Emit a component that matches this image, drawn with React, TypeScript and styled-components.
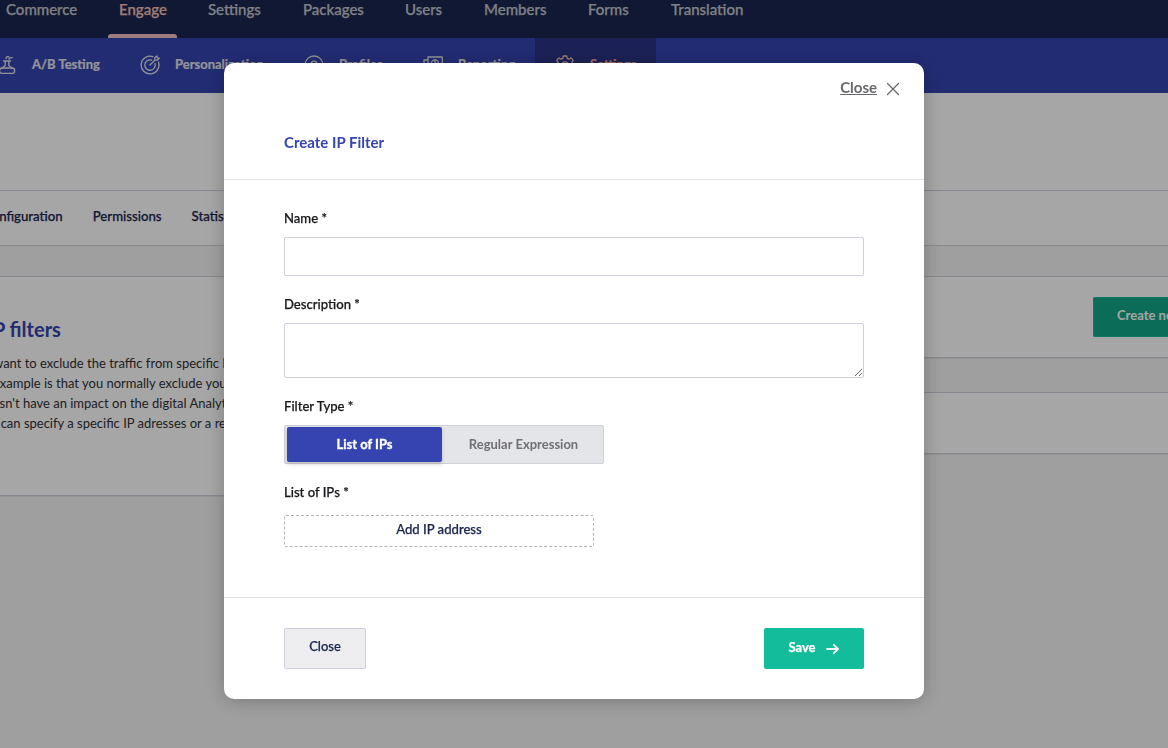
import React from 'react';
import styled, { createGlobalStyle, css } from 'styled-components';

const GlobalStyle = createGlobalStyle`
  *, *::before, *::after { box-sizing: border-box; }
  body { margin: 0; overflow: hidden; font-family: Lato, "Liberation Sans", sans-serif; background: #f5f5f5; }
  button, input, textarea { font-family: inherit; }
`;

const medium = css`
  font-weight: 500;
  -webkit-text-stroke: 0.25px currentColor;
`;

const Screen = styled.div`
  height: 748px;
  overflow: hidden;
  background: #f5f5f5;
`;

const TopNav = styled.nav`
  display: flex;
  height: 38px;
  margin-left: -5px;
  background: #1b264f;
`;

const TopItem = styled.a<{ $active?: boolean; $w: number }>`
  ${medium}
  flex: none;
  width: ${p => p.$w}px;
  height: 38px;
  padding: 0 0 0 11px;
  font-size: 15px;
  line-height: 18px;
  white-space: nowrap;
  color: ${p => (p.$active ? '#f5c1bc' : '#c4c6cd')};
`;

const ActiveMark = styled.span`
  display: block;
  width: 69px;
  height: 4px;
  margin: 16px 0 0 -11px;
  border-radius: 3px 3px 0 0;
  background: #f5c1bc;
`;

const SubNav = styled.nav`
  display: flex;
  height: 55px;
  margin-left: -3px;
  background: #3544b1;
`;

const SubItem = styled.a<{ $w: number; $active?: boolean }>`
  display: flex;
  flex: none;
  align-items: center;
  width: ${p => p.$w}px;
  height: 55px;
  padding: 0 0 3px ${p => (p.$active ? 20 : 0)}px;
  font-size: 13px;
  font-weight: 700;
  -webkit-text-stroke: 0.2px currentColor;
  white-space: nowrap;
  color: ${p => (p.$active ? '#f5a39b' : '#e3e4ea')};
  background: ${p => (p.$active ? '#2a3484' : 'transparent')};
  svg { flex: none; width: 20px; height: 20px; margin: 2px 15px 0 0; color: ${p => (p.$active ? '#f5c1bc' : '#e3e4ea')}; }
`;

const PageHeader = styled.header`
  height: 98px;
  background: #fff;
  border-bottom: 1px solid #d0d0dc;
`;

const Tabs = styled.nav`
  ${medium}
  display: flex;
  gap: 30px;
  height: 55px;
  padding-top: 17px;
  margin-left: -17px;
  background: #fff;
  border-bottom: 1px solid #d3d3d6;
  font-size: 13.200px;
  line-height: 16px;
  color: #1b264f;
`;

const Columns = styled.main`
  display: flex;
  justify-content: space-between;
  padding-top: 30px;
`;

const Intro = styled.section`
  width: 500px;
  height: 220px;
  padding-top: 40px;
  background: #fff;
  border: 1px solid #d0d0dc;
  border-left: 0;
  box-shadow: 0 1px 1px rgba(0, 0, 0, 0.06);
  overflow: hidden;
`;

const IntroTitle = styled.h2`
  margin: 0 0 12px -13px;
  font-size: 20px;
  line-height: 24px;
  font-weight: 700;
  color: #3544b1;
`;

const IntroLine = styled.p<{ $shift: number }>`
  margin: 0 0 0 ${p => -p.$shift}px;
  font-size: 13px;
  line-height: 20px;
  white-space: nowrap;
  color: #303033;
`;

const Results = styled.section`
  display: flex;
  flex-direction: column;
  gap: 34px;
  width: 600px;
`;

const Panel = styled.div<{ $h: number }>`
  display: flex;
  justify-content: flex-end;
  height: ${p => p.$h}px;
  padding-top: 20px;
  background: #fff;
  border: 1px solid #d0d0dc;
  border-right: 0;
  box-shadow: 0 1px 1px rgba(0, 0, 0, 0.06);
`;

const CreateButton = styled.button`
  width: 75px;
  height: 40px;
  padding: 0 0 4px 23px;
  border: 1px solid #12bb98;
  border-right: 0;
  border-radius: 2px 0 0 2px;
  background: #11a686;
  color: #fff;
  font-size: 13px;
  font-weight: 700;
  text-align: left;
  white-space: nowrap;
  overflow: hidden;
`;

const Overlay = styled.div`
  position: fixed;
  inset: 0;
  display: flex;
  justify-content: center;
  align-items: flex-start;
  padding-top: 63px;
  padding-right: 20px;
  background: rgba(0, 0, 0, 0.35);
`;

const Dialog = styled.div`
  width: 700px;
  height: 636px;
  border-radius: 10px;
  background: #fff;
  box-shadow: 0 2px 20px rgba(0, 0, 0, 0.25);
`;

const DialogHead = styled.div`
  height: 117px;
  padding: 15px 24px 0 60px;
  border-bottom: 1px solid #e3e3e6;
`;

const DismissRow = styled.div`
  display: flex;
  justify-content: flex-end;
  align-items: center;
  gap: 9px;
  height: 19px;
  color: #68686c;
  font-size: 15px;
  font-weight: 700;
  span { margin-top: -2px; text-decoration: underline; text-decoration-thickness: 1px; text-underline-offset: 1px; }
  svg { width: 14px; height: 14px; margin-top: 2px; }
`;

const DialogTitle = styled.h1`
  margin: 36px 0 0;
  font-size: 15px;
  line-height: 18px;
  font-weight: 700;
  color: #3544b1;
`;

const Form = styled.form`
  height: 418px;
  padding: 30px 60px 0;
  border-bottom: 1px solid #e3e3e6;
`;

const Label = styled.label`
  ${medium}
  display: block;
  height: 16px;
  font-size: 13.100px;
  line-height: 16px;
  color: #1a1a1d;
`;

const fieldLook = css`
  display: block;
  width: 100%;
  border: 1px solid #cfcfdc;
  border-radius: 2px;
  background: #fff;
  outline: none;
`;

const TextField = styled.input`
  ${fieldLook}
  height: 39px;
  margin: 11px 0 20px;
`;

const TextArea = styled.textarea`
  ${fieldLook}
  height: 55px;
  margin: 11px 0 20px;
  resize: vertical;
`;

const Segmented = styled.div`
  display: flex;
  width: 320px;
  height: 39px;
  margin: 11px 0 20px;
  padding: 1px 2px;
  border: 1px solid #d0d0d8;
  border-radius: 2px;
  background: #e4e5e9;
`;

const Segment = styled.button<{ $active?: boolean }>`
  flex: ${p => (p.$active ? '0 0 155px' : '1')};
  height: 35px;
  padding: 0 0 1px ${p => (p.$active ? 0 : 4)}px;
  border: 0;
  border-radius: 2px;
  font-size: 13px;
  font-weight: 700;
  -webkit-text-stroke: ${p => (p.$active ? '0.3px' : '0')} currentColor;
  color: ${p => (p.$active ? '#fff' : '#707074')};
  background: ${p => (p.$active ? '#3544b1' : 'transparent')};
  box-shadow: ${p => (p.$active ? '0 2px 4px rgba(0,0,0,0.18)' : 'none')};
`;

const AddButton = styled.button`
  ${medium}
  width: 310px;
  height: 32px;
  margin-top: 15px;
  padding: 0 0 4px;
  border: 1px dashed #b4b4b8;
  border-radius: 2px;
  background: #fff;
  font-size: 13.100px;
  color: #1b264f;
`;

const DialogFoot = styled.div`
  display: flex;
  justify-content: space-between;
  padding: 30px 60px 0;
`;

const FootButton = styled.button<{ $primary?: boolean }>`
  display: flex;
  align-items: center;
  justify-content: center;
  gap: 10px;
  width: ${p => (p.$primary ? 100 : 82)}px;
  height: 41px;
  padding: 0 ${p => (p.$primary ? 1 : 0)}px ${p => (p.$primary ? 3 : 5)}px 0;
  border: ${p => (p.$primary ? '0' : '1px solid #cfcfdc')};
  border-radius: 2px;
  font-size: 13px;
  font-weight: ${p => (p.$primary ? 700 : 500)};
  -webkit-text-stroke: 0.25px currentColor;
  color: ${p => (p.$primary ? '#fff' : '#1b264f')};
  background: ${p => (p.$primary ? '#13bc9a' : '#eeeef1')};
  svg { width: 13px; height: 12px; margin-top: 3px; }
`;

const line = { fill: 'none', stroke: 'currentColor', strokeWidth: 1.3, strokeLinecap: 'round' as const, strokeLinejoin: 'round' as const };

const FlaskIcon = () => (
  <svg viewBox="0 0 20 20" {...line}>
    <path d="M6.500 6h7M8.200 6v4.300c0 1.200-3.200 1.400-3.200 3.200M11.800 6v4.300c0 1.200 3.200 1.400 3.200 3.200" />
    <rect x="2.600" y="13" width="15" height="5.300" rx="2.300" />
    <path d="M9 3.600c0-1.500 1.400-2.400 2.800-1.800M12 4.200c.2-1.300 1.600-1.900 3.200-1.400" />
  </svg>
);

const TargetIcon = () => (
  <svg viewBox="0 0 20 20" {...line}>
    <path d="M13 1.600a8.900 8.900 0 1 0 5.500 5.600" />
    <path d="M11.600 5.100A5.200 5.200 0 1 0 15 8.600" />
    <path d="M10 10l5-5M14.800 5.200V2.800L17 .900l.3 1.900 1.900.4-2 2z" />
  </svg>
);

const ProfileIcon = () => (
  <svg viewBox="0 0 20 20" {...line}>
    <circle cx="10" cy="10" r="9" />
    <circle cx="10" cy="9" r="2.800" />
    <path d="M4.500 16.500c1-3 3-4 5.500-4s4.500 1 5.500 4" />
  </svg>
);

const ReportIcon = () => (
  <svg viewBox="0 0 20 20" {...line}>
    <path d="M5 2h14.300v14H5zM5 5H1v13h14v-2" />
    <circle cx="12" cy="8.500" r="3.600" />
    <path d="M12 5v3.500h3.500" />
  </svg>
);

const GearIcon = () => (
  <svg viewBox="0 0 20 20" {...line}>
    <path d="M8.300 1h3.400l.5 2.400 1.700.8 2.200-1.300 2.100 2.200-1.300 2.200.7 1.700 2.200.5v2.600l-2.200.5-.7 1.700 1.300 2.200-2.100 2.200-2.200-1.300-1.700.7-.5 2.400H8.300l-.5-2.400-1.700-.7-2.200 1.300-2.100-2.200 1.300-2.200-.7-1.700L.2 12V9.500L2.400 9l.7-1.700-1.300-2.200 2.100-2.200 2.200 1.300 1.700-.8z" />
    <circle cx="10" cy="10.500" r="3.600" />
  </svg>
);

const CloseIcon = () => (
  <svg viewBox="0 0 14 14" {...line}><path d="M1.500 1.500l11 11M12.500 1.500l-11 11" /></svg>
);

const ArrowIcon = () => (
  <svg viewBox="0 0 13 12" {...line} strokeWidth={1.8}><path d="M1 6h11M7.800 1.800L12 6l-4.200 4.200" /></svg>
);

const topItems: [string, number][] = [
  ['Commerce', 113], ['Engage', 89], ['Settings', 95], ['Packages', 102],
  ['Users', 79], ['Members', 104], ['Forms', 83], ['Translation', 513],
];

export default function App() {
  return (
    <>
      <GlobalStyle />
      <Screen>
        <TopNav>
          {topItems.map(([name, w]) => (
            <TopItem key={name} $w={w} $active={name === 'Engage'}>
              {name}
              {name === 'Engage' && <ActiveMark />}
            </TopItem>
          ))}
        </TopNav>
        <SubNav>
          <SubItem $w={143}><FlaskIcon />A/B Testing</SubItem>
          <SubItem $w={164}><TargetIcon />Personalization</SubItem>
          <SubItem $w={119}><ProfileIcon />Profiles</SubItem>
          <SubItem $w={112}><ReportIcon />Reporting</SubItem>
          <SubItem $w={121} $active><GearIcon />Settings</SubItem>
        </SubNav>
        <PageHeader />
        <Tabs><span>Configuration</span><span>Permissions</span><span>Statistics</span></Tabs>
        <Columns>
          <Intro>
            <IntroTitle>IP filters</IntroTitle>
            <IntroLine $shift={7}>want to exclude the traffic from specific IP</IntroLine>
            <IntroLine $shift={7}>example is that you normally exclude your</IntroLine>
            <IntroLine $shift={22}>doesn't have an impact on the digital Analytics</IntroLine>
            <IntroLine $shift={24}>You can specify a specific IP adresses or a regular</IntroLine>
          </Intro>
          <Results>
            <Panel $h={82}><CreateButton>Create new</CreateButton></Panel>
            <Panel $h={62} />
          </Results>
        </Columns>
      </Screen>
      <Overlay>
        <Dialog role="dialog">
          <DialogHead>
            <DismissRow><span>Close</span><CloseIcon /></DismissRow>
            <DialogTitle>Create IP Filter</DialogTitle>
          </DialogHead>
          <Form>
            <Label>Name *</Label>
            <TextField />
            <Label>Description *</Label>
            <TextArea />
            <Label>Filter Type *</Label>
            <Segmented>
              <Segment type="button" $active>List of IPs</Segment>
              <Segment type="button">Regular Expression</Segment>
            </Segmented>
            <Label>List of IPs *</Label>
            <AddButton type="button">Add IP address</AddButton>
          </Form>
          <DialogFoot>
            <FootButton>Close</FootButton>
            <FootButton $primary>Save<ArrowIcon /></FootButton>
          </DialogFoot>
        </Dialog>
      </Overlay>
    </>
  );
}
